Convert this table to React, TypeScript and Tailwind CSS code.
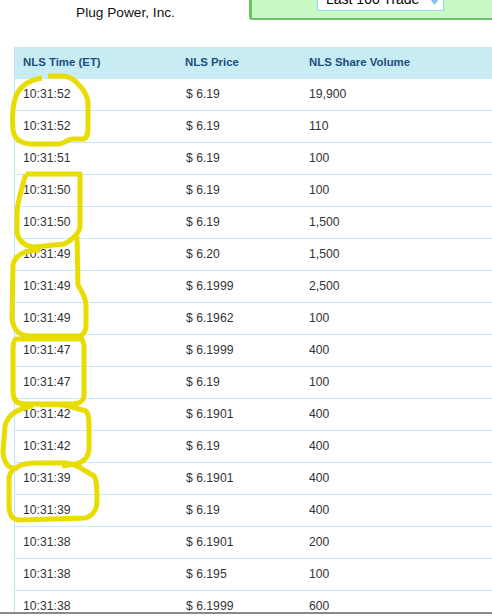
const trades = [
  ["10:31:52", "$ 6.19", "19,900"],
  ["10:31:52", "$ 6.19", "110"],
  ["10:31:51", "$ 6.19", "100"],
  ["10:31:50", "$ 6.19", "100"],
  ["10:31:50", "$ 6.19", "1,500"],
  ["10:31:49", "$ 6.20", "1,500"],
  ["10:31:49", "$ 6.1999", "2,500"],
  ["10:31:49", "$ 6.1962", "100"],
  ["10:31:47", "$ 6.1999", "400"],
  ["10:31:47", "$ 6.19", "100"],
  ["10:31:42", "$ 6.1901", "400"],
  ["10:31:42", "$ 6.19", "400"],
  ["10:31:39", "$ 6.1901", "400"],
  ["10:31:39", "$ 6.19", "400"],
  ["10:31:38", "$ 6.1901", "200"],
  ["10:31:38", "$ 6.195", "100"],
  ["10:31:38", "$ 6.1999", "600"],
];

// hand drawn marker circles over the time column
function Scribbles() {
  return (
    <svg
      className="absolute left-0 top-0 pointer-events-none"
      width="492"
      height="616"
      fill="none"
      stroke="#e8dc00"
      strokeWidth="5"
      strokeLinejoin="round"
      strokeLinecap="butt"
    >
      <path d="M42 78 C30 80 20 86 16 96 C13 104 12 118 13 130 C14 138 20 143 30 144 L58 144 C64 144 66 140 72 139 L84 139 C88 137 88 132 88 126 L88 104 C88 96 84 90 79 85 C74 79 68 76 62 76 L48 76" />
      <path d="M26 174 L80 174 L80 228 C78 234 72 240 64 244 L35 247 C25 247 18 240 17 232 L17 215 C17 200 22 190 24 180 L26 174" />
      <path d="M40 250 C25 250 15 255 13 265 L12 318 C13 330 20 336 30 336 L80 336 C85 334 86 330 86 325 L86 305 C86 298 82 292 78 285 L77 236" />
      <path d="M17 339 L82 339 L84 345 L84 395 C84 400 80 404 72 404 L25 404 C17 404 13 400 13 392 L13 350 C13 343 14 339 17 339" />
      <path d="M33 406 C20 408 8 414 5 426 L3 452 C4 462 8 468 14 468" />
      <path d="M40 405 C55 404 65 405 72 407 L86 411 C89 414 89 420 89 428 L89 450 C88 458 84 462 76 464 L62 466" />
      <path d="M14 470 C18 465 25 463 35 463 L60 463 C70 462 78 466 84 470 L94 476 C97 480 97 490 97 500 C97 510 93 516 85 518 L20 520 C12 520 9 515 9 505 L9 480 C9 474 11 471 14 470" />
    </svg>
  );
}

export default function App() {
  return (
    <div className="relative w-[492px] bg-white font-['Liberation_Sans',Arial,sans-serif]">
      <div className="h-[612px] overflow-hidden">
        <div className="flex h-[47px] items-start">
          <div className="w-[249px] pl-[76px] pt-[5px] text-[13.7px] leading-[16px] text-[#111]">
            Plug Power, Inc.
          </div>
          <div className="flex-1 h-[20px] bg-[#c6f9c4] border-l-[3px] border-b-2 border-[#6dc26a] rounded-bl-[3px]">
            <div className="ml-[65px] mt-[-13px] w-[127px] h-[24px] bg-white border border-[#9dd4ee] flex items-center justify-between pl-[8px] pr-[4px] text-[14px] text-black">
              <span>Last 100 Trade</span>
              <svg width="9" height="6" viewBox="0 0 9 6" className="mt-[6px]">
                <path d="M0 0 L9 0 L4.5 6 Z" fill="#7cc6ee" />
              </svg>
            </div>
          </div>
        </div>

        <div className="ml-[14px] border-l border-[#bfe6ee]">
          <div className="grid grid-cols-[162px_124px_1fr] h-[32px] items-center bg-[#c8ecf3] text-[11.4px] font-bold text-[#1d4f7c]">
            <div className="pl-[8px]">NLS Time (ET)</div>
            <div className="pl-[8px]">NLS Price</div>
            <div className="pl-[8px]">NLS Share Volume</div>
          </div>
          {trades.map((t, i) => (
            <div
              key={i}
              className="grid grid-cols-[162px_124px_1fr] h-[32px] items-center border-b border-[#c4ecf3] text-[12.2px] text-[#333]"
            >
              <div className="pl-[8px]">{t[0]}</div>
              <div className="pl-[9px]">{t[1]}</div>
              <div className="pl-[8px]">{t[2]}</div>
            </div>
          ))}
        </div>
      </div>
      <div className="h-[2px] bg-[#8a8a8a]" />
      <Scribbles />
    </div>
  );
}
